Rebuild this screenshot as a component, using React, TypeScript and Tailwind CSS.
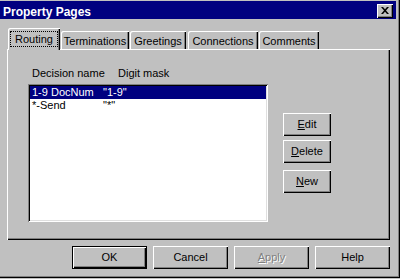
import type { ReactNode } from 'react';

const bevel = 'shadow-[inset_1px_1px_#fff,inset_-1px_-1px_#000,inset_-2px_-2px_#808080]';

const Button = ({ children, className = '', isDefault = false }: { children: ReactNode; className?: string; isDefault?: boolean }) => (
  <button
    className={`flex items-center justify-center bg-[#c0c0c0] leading-[13px] ${bevel} ${isDefault ? 'border border-black' : ''} ${className}`}
  >
    {children}
  </button>
);

const tabs = [
  { label: 'Terminations', w: 'w-[68px] ml-[1px]' },
  { label: 'Greetings', w: 'w-[56px] ml-[1px]' },
  { label: 'Connections', w: 'w-[70px] ml-[2px]' },
  { label: 'Comments', w: 'w-[60px] ml-[1px]' },
];

export default function App() {
  return (
    <div className="h-[279px] w-[400px] overflow-hidden bg-[#c0c0c0] font-['Liberation_Sans',Arial,sans-serif] text-[11px] text-black">
      <div className="flex h-[278px] w-[400px] flex-col pt-px pr-[4px] shadow-[inset_-1px_-1px_#000,inset_-2px_-2px_#808080]">
        {/* Title bar */}
        <div className="flex h-[18px] items-start justify-between bg-[#000080]">
          <span className="pl-[3px] pt-[4px] text-[12px] font-bold leading-[14px] text-white">Property Pages</span>
          <button className={`mr-[3px] mt-[3px] flex h-[14px] w-[16px] items-center justify-center bg-[#c0c0c0] ${bevel}`}>
            <svg width="8" height="7" viewBox="0 0 8 7" className="-mt-px">
              <path d="M0 0h2l2 2.3L6 0h2L5 3.5 8 7H6L4 4.7 2 7H0l3-3.5z" fill="#000" />
            </svg>
          </button>
        </div>

        {/* Tabs */}
        <div className="mt-[9px] flex h-[21px] items-end pl-[8px]">
          <div className="relative z-10 -mb-px h-[22px] w-[52px] rounded-tl-[2px] bg-[#c0c0c0] px-[2px] pt-[3px] shadow-[inset_1px_1px_#fff,inset_-1px_0_#000,inset_-2px_0_#808080]">
            <div className="h-[16px] border border-dotted border-black text-center leading-[14px]">Routing</div>
          </div>
          {tabs.map((t) => (
            <div
              key={t.label}
              className={`h-[18px] rounded-tl-[2px] pt-[2px] text-center leading-[16px] shadow-[inset_1px_1px_#fff,inset_-1px_0_#000,inset_-2px_0_#808080] ${t.w}`}
            >
              {t.label}
            </div>
          ))}
        </div>

        {/* Tab panel */}
        <div className="ml-[7px] h-[191px] w-[383px] pl-[21px] pt-[18px] shadow-[inset_1px_1px_#fff,inset_-1px_-1px_#000,inset_-2px_-2px_#808080]">
          <div className="flex h-[13px] pl-[4px] leading-[13px]">
            <span className="w-[86px]">Decision name</span>
            <span>Digit mask</span>
          </div>
          <div className="mt-[4px] flex">
            <div className="h-[138px] w-[240px] bg-white p-[2px] shadow-[inset_1px_1px_#808080,inset_-1px_-1px_#fff,inset_2px_2px_#000,inset_-2px_-2px_#dfdfdf]">
              <div className="flex h-[13px] bg-[#000080] pl-[2px] leading-[13px] text-white">
                <span className="w-[71px]">1-9 DocNum</span>
                <span>"1-9"</span>
              </div>
              <div className="flex h-[13px] pl-[2px] leading-[13px]">
                <span className="w-[71px]">*-Send</span>
                <span>"*"</span>
              </div>
            </div>
            <div className="ml-[15px] flex flex-col pt-[29px]">
              <Button className="h-[23px] w-[48px]">
                <span className="underline">E</span>dit
              </Button>
              <Button className="mt-[4px] h-[23px] w-[48px]">
                <span className="underline">D</span>elete
              </Button>
              <Button className="mt-[7px] h-[23px] w-[48px]">
                <span className="underline">N</span>ew
              </Button>
            </div>
          </div>
        </div>

        {/* Dialog buttons */}
        <div className="mt-[6px] flex gap-[6px] pl-[72px]">
          <Button isDefault className="h-[23px] w-[75px]">OK</Button>
          <Button className="h-[23px] w-[75px]">Cancel</Button>
          <Button className="h-[23px] w-[75px] text-[#808080] [text-shadow:1px_1px_0_#fff]">
            <span className="underline">A</span>pply
          </Button>
          <Button className="h-[23px] w-[75px]">Help</Button>
        </div>
      </div>
    </div>
  );
}
